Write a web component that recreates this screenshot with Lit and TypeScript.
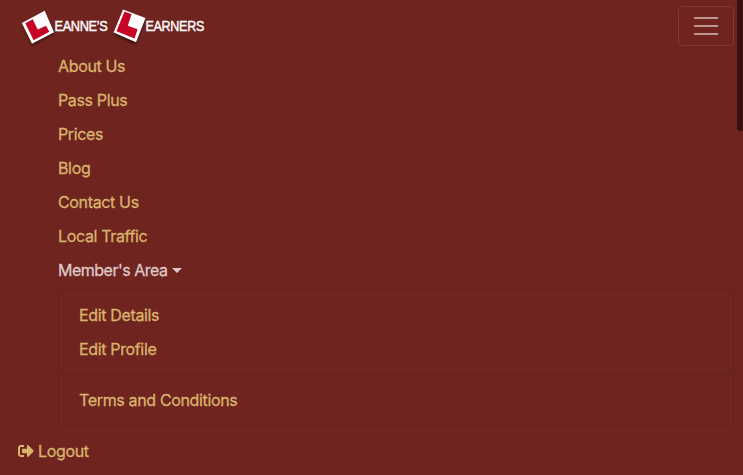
import { LitElement, html, css } from "lit";
import { customElement, state } from "lit/decorators.js";

@customElement("brand-logo")
class BrandLogo extends LitElement {
  static styles = css`
    :host { display: block; width: 200px; height: 48px; }
    svg { display: block; }
    .shade { fill: #000; opacity: 0.45; filter: blur(1px); }
    .plate { fill: #fff; }
    .ell { fill: #c80426; }
    .word { fill: #fff; stroke: #fff; stroke-width: 0.4px; font: 400 14.5px "Liberation Sans", Arial, sans-serif; }
  `;
  render() {
    return html`<svg width="200" height="48" viewBox="18 0 200 48" role="img" aria-label="Leanne's Learners">
      <path class="shade" d="M44 13 22 25 32 46 54 34ZM123 11 114 35 135.500 45 145 20Z" />
      <path class="plate" d="M44.700 10.700 21.800 23 32 43.700 54 32.300ZM123 9.500 145.500 18 136 42.300 113.600 32.500Z" />
      <path class="ell" d="M25.300 23.300 32.700 19.200 37.700 29.600 46 25.800 49.300 31.700 33.600 40.200ZM124.500 11.600 131.500 14.300 127.800 25.700 137.600 29.300 134.600 38.400 116.500 31.300Z" />
      <text class="word" x="54.500" y="30.700" textLength="53" lengthAdjust="spacingAndGlyphs">EANNE’S</text>
      <text class="word" x="145.500" y="30.700" textLength="58.500" lengthAdjust="spacingAndGlyphs">EARNERS</text>
    </svg>`;
  }
}

@customElement("app-root")
class AppRoot extends LitElement {
  static styles = css`
    :host {
      display: block; box-sizing: border-box; position: relative;
      height: 475px; overflow: hidden; background: #70241f;
      font: 400 16px/24px Inter, "Liberation Sans", sans-serif;
      letter-spacing: -0.35px; color: #d8b36c;
      -webkit-text-stroke: 0.3px currentColor;
    }
    header { display: flex; justify-content: space-between; height: 49px; padding: 0 9px 0 18px; }
    .toggle {
      box-sizing: border-box; width: 56px; height: 40px; margin-top: 6px; padding: 0;
      display: flex; align-items: center; justify-content: center;
      background: none; border: 1px solid #7f3a35; border-radius: 4px;
    }
    .bars { stroke: #bd9591; stroke-width: 2; }
    ul { list-style: none; margin: 0; padding: 0; }
    .nav { margin-left: 58px; margin-right: 9px; }
    .nav a { display: block; padding: 5px 0; }
    a { color: inherit; text-decoration: none; white-space: nowrap; }
    .nav a.open { display: flex; align-items: center; color: #dcc8c7; letter-spacing: -0.5px; }
    .caret {
      margin-left: 4.5px; border-top: 5px solid;
      border-left: 5px solid transparent; border-right: 5px solid transparent;
    }
    .menu {
      box-sizing: border-box; height: 137px; margin-top: 2px; padding: 8px 0;
      border: 1px solid #642019; border-radius: 4px;
    }
    .menu a { padding: 5px 20px; }
    .divider { height: 1px; margin: 8px 0; background: #60211f; }
    .logout { display: flex; align-items: center; gap: 4px; margin: 13px 0 0 18px; width: max-content; }
    .logout svg { fill: currentColor; }
    .thumb {
      position: absolute; top: 0; right: 0; width: 6px; height: 131px;
      background: #38110f; border-radius: 0 0 0 3px;
    }
  `;

  @state() links = ["About Us", "Pass Plus", "Prices", "Blog", "Contact Us", "Local Traffic"];

  render() {
    return html`
      <header>
        <brand-logo></brand-logo>
        <button class="toggle" aria-label="Toggle navigation">
          <svg class="bars" width="24" height="18" viewBox="0 0 24 18"><path d="M0 1H24M0 9H24M0 17H24" /></svg>
        </button>
      </header>
      <ul class="nav">
        ${this.links.map((t) => html`<li><a href="#">${t}</a></li>`)}
        <li>
          <a class="open" href="#">Member's Area<span class="caret"></span></a>
          <div class="menu">
            <a href="#">Edit Details</a>
            <a href="#">Edit Profile</a>
            <div class="divider"></div>
            <a href="#">Terms and Conditions</a>
          </div>
        </li>
      </ul>
      <a class="logout" href="#">
        <svg width="16" height="16" viewBox="0 0 512 512"><path d="M497 273L329 441c-15 15-41 4.500-41-17v-96H152c-13.300 0-24-10.700-24-24v-96c0-13.300 10.700-24 24-24h136V88c0-21.400 25.900-32 41-17l168 168c9.300 9.400 9.300 24.600 0 34zM192 436v-40c0-6.600-5.400-12-12-12H96c-17.700 0-32-14.300-32-32V160c0-17.700 14.300-32 32-32h84c6.600 0 12-5.400 12-12V76c0-6.600-5.400-12-12-12H96c-53 0-96 43-96 96v192c0 53 43 96 96 96h84c6.600 0 12-5.400 12-12z" /></svg>
        <span>Logout</span>
      </a>
      <div class="thumb"></div>
    `;
  }
}
